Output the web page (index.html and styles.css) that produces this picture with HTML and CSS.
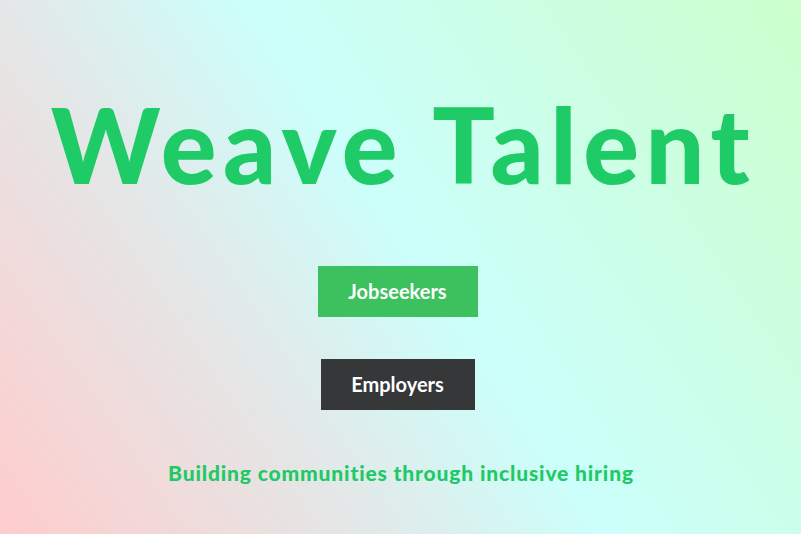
FILE: index.html
```html
<!DOCTYPE html>
<html lang="en">
<head>
<meta charset="utf-8">
<title>Weave Talent</title>
<link rel="stylesheet" href="styles.css">
</head>
<body>
<main class="hero">
  <h1 class="title">Weave Talent</h1>
  <a class="btn btn-green" href="#">Jobseekers</a>
  <a class="btn btn-dark" href="#">Employers</a>
  <p class="tagline">Building communities through inclusive hiring</p>
</main>
</body>
</html>
```
FILE: styles.css
```css
html, body {
  margin: 0;
  height: 100%;
}
body {
  background: linear-gradient(56deg, #ffcccc 0%, #e5e6e6 30%, #ccfffb 52%, #ccffcc 100%);
  font-family: "Lato", "Liberation Sans", sans-serif;
}
.hero {
  display: flex;
  flex-direction: column;
  align-items: center;
}
.title {
  margin: 84px 0 0;
  padding-left: 6px;
  font-family: "Lato", sans-serif;
  font-weight: 900;
  font-size: 104px;
  line-height: 120px;
  letter-spacing: 6.6px;
  color: #1fcb66;
}
.btn {
  display: block;
  padding: 15px 30px;
  font-size: 20px;
  line-height: 21px;
  font-weight: 700;
  color: #ffffff;
  text-decoration: none;
  text-align: center;
  margin-right: 6px;
}
.btn-green {
  margin-top: 62px;
  background: #3dc15e;
  width: 100px;
}
.btn-dark {
  margin-top: 42px;
  background: #363739;
  width: 94px;
}
.tagline {
  margin: 50px 0 0;
  padding-left: 1px;
  font-family: "Lato", sans-serif;
  font-weight: 900;
  font-size: 21px;
  line-height: 26px;
  letter-spacing: 0.85px;
  color: #20c966;
}
```
